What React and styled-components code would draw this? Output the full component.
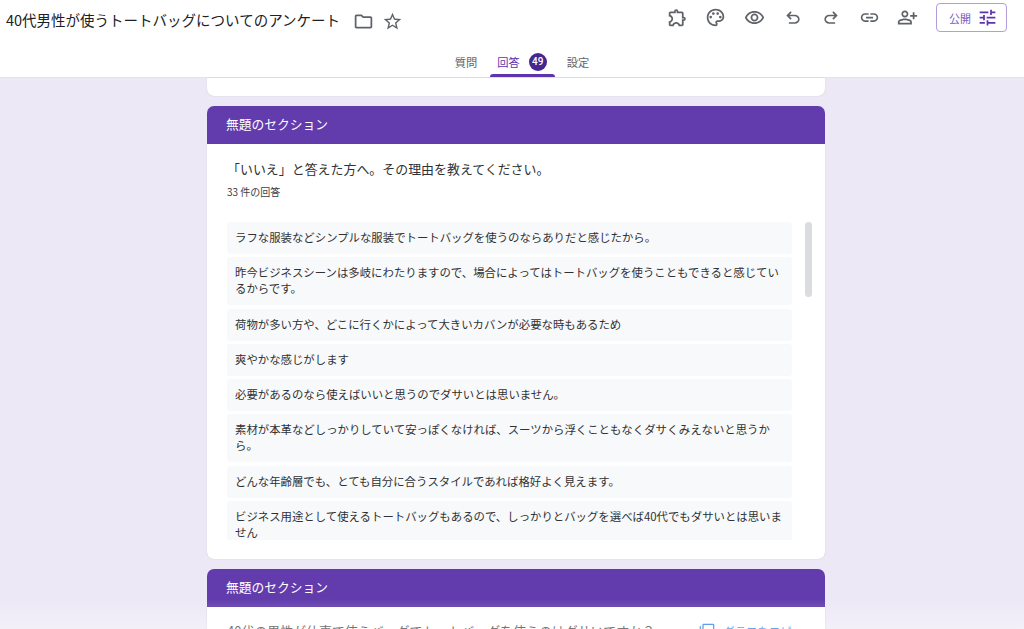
import React from "react";
import styled, { createGlobalStyle } from "styled-components";
import {
  MdOutlineExtension,
  MdOutlinePalette,
  MdOutlineRemoveRedEye,
  MdLink,
  MdOutlinePersonAddAlt,
  MdTune,
  MdOutlineFolder,
  MdStarBorder,
  MdOutlineFilterNone,
} from "react-icons/md";

const GlobalStyle = createGlobalStyle`
  html, body {
    margin: 0;
    padding: 0;
    height: 100%;
    overflow: hidden;
    background: #ece8f6;
    font-family: "Noto Sans CJK JP", "Noto Sans", Roboto, sans-serif;
    color: #202124;
  }
`;

const answers = [
  "ラフな服装などシンプルな服装でトートバッグを使うのならありだと感じたから。",
  "昨今ビジネスシーンは多岐にわたりますので、場合によってはトートバッグを使うこともできると感じているからです。",
  "荷物が多い方や、どこに行くかによって大きいカバンが必要な時もあるため",
  "爽やかな感じがします",
  "必要があるのなら使えばいいと思うのでダサいとは思いません。",
  "素材が本革などしっかりしていて安っぽくなければ、スーツから浮くこともなくダサくみえないと思うから。",
  "どんな年齢層でも、とても自分に合うスタイルであれば格好よく見えます。",
  "ビジネス用途として使えるトートバッグもあるので、しっかりとバッグを選べば40代でもダサいとは思いません",
];

// material symbols undo, the redo is the same path mirrored
const UndoIcon = ({ mirror }) => (
  <svg
    width="20"
    height="20"
    viewBox="0 0 24 24"
    fill="currentColor"
    transform={mirror ? "scale(-1 1)" : undefined}
  >
    <path d="M7 19v-2h7.1q1.575 0 2.738-1T18 13.5q0-1.5-1.162-2.5T14.1 10H7.8l2.6 2.6L9 14 4 9l5-5 1.4 1.4L7.8 8h6.3q2.425 0 4.163 1.575T20 13.5q0 2.35-1.737 3.925T14.1 19H7z" />
  </svg>
);

export default function App() {
  return (
    <Page>
      <GlobalStyle />
      <Header>
        <TopRow>
          <Title>40代男性が使うトートバッグについてのアンケート</Title>
          <TitleIcons>
            <MdOutlineFolder size={21} />
            <MdStarBorder size={21} />
          </TitleIcons>
          <Actions>
            <ActionIcon><MdOutlineExtension size={21} /></ActionIcon>
            <ActionIcon><MdOutlinePalette size={21} /></ActionIcon>
            <ActionIcon><MdOutlineRemoveRedEye size={21} /></ActionIcon>
            <ActionIcon><UndoIcon /></ActionIcon>
            <ActionIcon><UndoIcon mirror /></ActionIcon>
            <ActionIcon><MdLink size={21} /></ActionIcon>
            <ActionIcon><MdOutlinePersonAddAlt size={21} /></ActionIcon>
            <PublishButton>
              公開
              <MdTune size={21} color="#5e35b1" />
            </PublishButton>
          </Actions>
        </TopRow>
        <Tabs>
          <Tab>質問</Tab>
          <Tab $active>
            回答
            <Badge>49</Badge>
          </Tab>
          <Tab>設定</Tab>
        </Tabs>
      </Header>
      <Main>
        <CardEnd />
        <Section>
          <SectionHeader>無題のセクション</SectionHeader>
          <SectionBody>
            <Question>「いいえ」と答えた方へ。その理由を教えてください。</Question>
            <Count>33 件の回答</Count>
            <ListWrap>
              <List>
                {answers.map((a) => (
                  <Answer key={a}>{a}</Answer>
                ))}
              </List>
              <ScrollThumb />
            </ListWrap>
          </SectionBody>
        </Section>
        <Section>
          <SectionHeader>無題のセクション</SectionHeader>
          <NextBody>
            <Question>40代の男性が仕事で使うバッグでトートバッグを使うのはダサいですか？</Question>
            <CopyLink>
              <MdOutlineFilterNone size={16} />
              グラフをコピー
            </CopyLink>
          </NextBody>
        </Section>
      </Main>
      <BottomFade />
    </Page>
  );
}

const Page = styled.div`
  position: relative;
  height: 629px;
  overflow: hidden;
`;
const Header = styled.header`
  height: 77px;
  background: #fff;
  border-bottom: 1px solid #e3e3e8;
  display: flex;
  flex-direction: column;
`;
const TopRow = styled.div`
  height: 44px;
  display: flex;
  align-items: flex-start;
  padding: 3px 17px 0 6px;
`;
const Title = styled.div`
  font-size: 14.5px;
  line-height: 33px;
  color: #202124;
  white-space: nowrap;
`;
const TitleIcons = styled.div`
  display: flex;
  gap: 8px;
  margin: 8px 0 0 13px;
  color: #5f6368;
`;
const Actions = styled.div`
  margin-left: auto;
  display: flex;
  align-items: flex-start;
`;
const ActionIcon = styled.div`
  width: 38.4px;
  height: 29px;
  display: flex;
  align-items: center;
  justify-content: center;
  color: #5f6368;
`;
const PublishButton = styled.div`
  width: 71px;
  height: 29px;
  margin-left: 9px;
  box-sizing: border-box;
  border: 1px solid #b39ddb;
  border-radius: 4px;
  display: flex;
  align-items: center;
  justify-content: space-between;
  padding: 0 8px 0 12px;
  font-size: 11px;
  color: #7e57c2;
`;
const Tabs = styled.nav`
  display: flex;
  justify-content: center;
  height: 33px;
  padding-left: 20px;
`;
const Tab = styled.div`
  position: relative;
  display: flex;
  align-items: center;
  gap: 9px;
  padding: 2px 10px 0;
  box-sizing: border-box;
  height: 33px;
  font-size: 11.25px;
  color: ${(p) => (p.$active ? "#5e35b1" : "#5f6368")};
  ${(p) =>
    p.$active &&
    `&::after {
      content: "";
      position: absolute;
      left: 3px;
      right: 2px;
      bottom: 0;
      height: 3px;
      border-radius: 3px 3px 0 0;
      background: #5e35b1;
    }`}
`;
const Badge = styled.span`
  width: 18px;
  height: 18px;
  border-radius: 50%;
  background: #45278f;
  color: #fff;
  font-family: Roboto, sans-serif;
  font-size: 10px;
  font-weight: 500;
  display: flex;
  align-items: center;
  justify-content: center;
`;
const Main = styled.main`
  padding-left: 207px;
  width: 618px;
  display: flex;
  flex-direction: column;
  gap: 10px;
`;
const CardEnd = styled.div`
  height: 18px;
  background: #fff;
  border-radius: 0 0 7px 7px;
  box-shadow: 0 0 1px rgba(60, 64, 67, 0.3);
`;
const Section = styled.section`
  display: flex;
  flex-direction: column;
`;
const SectionHeader = styled.div`
  height: 38px;
  border-radius: 7px 7px 0 0;
  background: #623cad;
  color: #fff;
  font-size: 12.75px;
  line-height: 36px;
  padding-left: 19px;
`;
const SectionBody = styled.div`
  height: 415px;
  box-sizing: border-box;
  background: #fff;
  border-radius: 0 0 7px 7px;
  box-shadow: 0 0 1px rgba(60, 64, 67, 0.3);
  padding: 15px 0 0 20px;
`;
const Question = styled.div`
  font-size: 12.95px;
  line-height: 20px;
  color: #303134;
`;
const Count = styled.div`
  font-size: 10px;
  line-height: 14px;
  margin-top: 6px;
  color: #3c4043;
`;
const ListWrap = styled.div`
  position: relative;
  margin-top: 23px;
  height: 318px;
  width: 585px;
  overflow: hidden;
`;
const List = styled.div`
  width: 565px;
  display: flex;
  flex-direction: column;
  gap: 3.3px;
`;
const Answer = styled.div`
  background: #f8f9fa;
  border-radius: 3px;
  padding: 7px 8px 9px;
  font-size: 11.4px;
  line-height: 16px;
  color: #303134;
`;
const ScrollThumb = styled.div`
  position: absolute;
  top: 0;
  right: 0;
  width: 7px;
  height: 75px;
  border-radius: 4px;
  background: #dadce0;
`;
const NextBody = styled.div`
  height: 60px;
  background: #fff;
  box-shadow: 0 0 1px rgba(60, 64, 67, 0.3);
  padding: 14px 22px 0 20px;
  display: flex;
  justify-content: space-between;
  align-items: flex-start;
`;
const CopyLink = styled.div`
  display: flex;
  gap: 8px;
  align-items: center;
  font-size: 11.4px;
  line-height: 20px;
  color: #1a73e8;
`;
const BottomFade = styled.div`
  position: absolute;
  left: 0;
  right: 0;
  bottom: 0;
  height: 30px;
  background: linear-gradient(rgba(255, 255, 255, 0), rgba(255, 255, 255, 0.35));
  pointer-events: none;
`;
